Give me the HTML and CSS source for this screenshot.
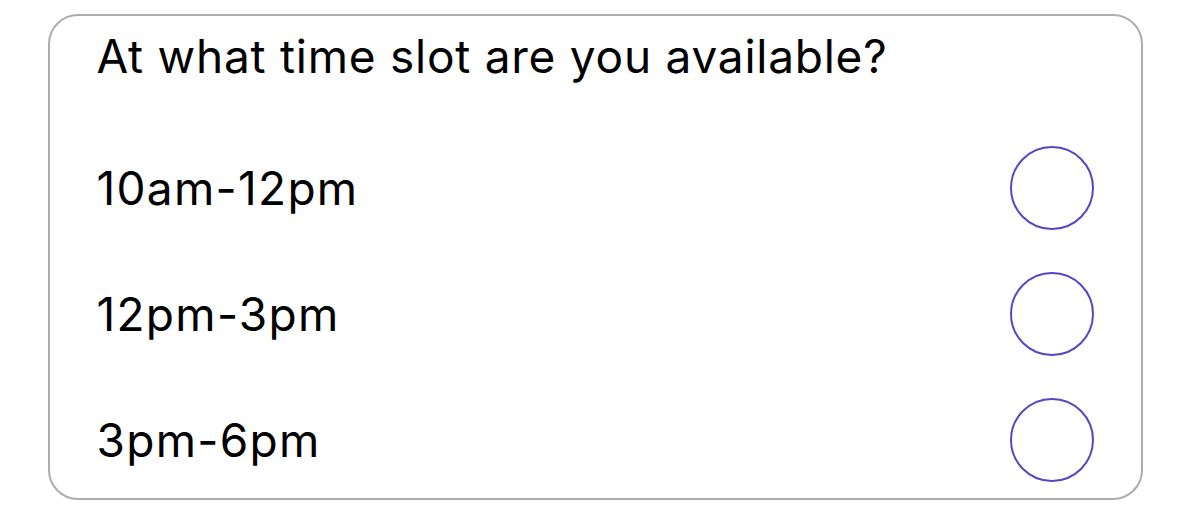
FILE: index.html
```html
<!DOCTYPE html>
<html>
<head>
<meta charset="utf-8">
<link rel="stylesheet" href="styles.css">
</head>
<body>
<div class="card">
  <div class="title">At what time slot are you available?</div>
  <div class="options">
    <div class="row"><span class="label">10am-12pm</span><span class="radio"></span></div>
    <div class="row"><span class="label">12pm-3pm</span><span class="radio"></span></div>
    <div class="row"><span class="label">3pm-6pm</span><span class="radio"></span></div>
  </div>
</div>
</body>
</html>
```
FILE: styles.css
```css
html, body { margin: 0; padding: 0; background: #fff; }
body {
  font-family: "Inter", "Liberation Sans", sans-serif;
  color: #000;
}
.card {
  box-sizing: border-box;
  margin: 14px 0 0 48px;
  width: 1095px;
  height: 486px;
  border: 2.5px solid #adadad;
  border-radius: 30px;
  padding: 12px 47px 0 46.5px;
}
.title {
  font-size: 46px;
  letter-spacing: 0.75px;
  line-height: 56px;
  height: 56px;
}
.options {
  margin-top: 62px;
  display: flex;
  flex-direction: column;
  gap: 42px;
}
.row {
  display: flex;
  align-items: center;
  justify-content: space-between;
  height: 84px;
}
.label { font-size: 46px; letter-spacing: 1.3px; }
.radio {
  box-sizing: border-box;
  width: 84px;
  height: 84px;
  border: 2px solid #5b44c4;
  border-radius: 50%;
}
```
